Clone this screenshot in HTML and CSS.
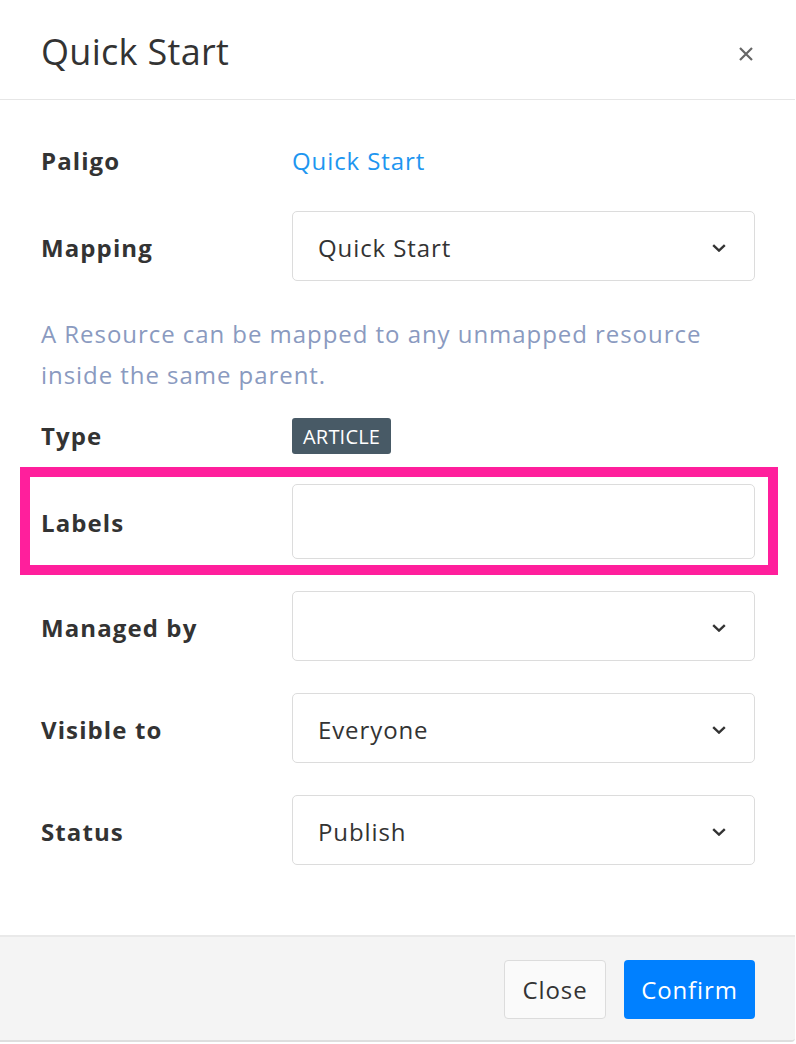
FILE: index.html
```html
<!DOCTYPE html>
<html lang="en">
<head>
<meta charset="utf-8">
<title>Quick Start</title>
<link rel="stylesheet" href="styles.css">
</head>
<body>
<div class="modal">
  <header class="modal-header">
    <h1 class="modal-title">Quick Start</h1>
    <button class="modal-close" aria-label="Close">
      <svg width="14" height="14" viewBox="0 0 14 14"><path d="M1 1L13 13M13 1L1 13" stroke="#666" stroke-width="2.2" fill="none"/></svg>
    </button>
  </header>
  <div class="modal-body">
    <div class="row row-text">
      <div class="label">Paligo</div>
      <div class="value"><a class="link" href="#">Quick Start</a></div>
    </div>
    <div class="row row-field row-mapping">
      <div class="label">Mapping</div>
      <div class="select"><span>Quick Start</span><svg class="chev" width="14" height="8" viewBox="0 0 14 8"><path d="M1.2 1.2L7 6.6L12.8 1.2" stroke="#333" stroke-width="2.4" fill="none"/></svg></div>
    </div>
    <p class="help">A Resource can be mapped to any unmapped resource inside the same parent.</p>
    <div class="row row-type">
      <div class="label">Type</div>
      <div class="value"><span class="badge">ARTICLE</span></div>
    </div>
    <div class="row row-field row-labels">
      <div class="label">Labels</div>
      <div class="input"></div>
    </div>
    <div class="row row-field row-managed">
      <div class="label">Managed by</div>
      <div class="select"><span></span><svg class="chev" width="14" height="8" viewBox="0 0 14 8"><path d="M1.2 1.2L7 6.6L12.8 1.2" stroke="#333" stroke-width="2.4" fill="none"/></svg></div>
    </div>
    <div class="row row-field">
      <div class="label">Visible to</div>
      <div class="select"><span>Everyone</span><svg class="chev" width="14" height="8" viewBox="0 0 14 8"><path d="M1.2 1.2L7 6.6L12.8 1.2" stroke="#333" stroke-width="2.4" fill="none"/></svg></div>
    </div>
    <div class="row row-field">
      <div class="label">Status</div>
      <div class="select"><span>Publish</span><svg class="chev" width="14" height="8" viewBox="0 0 14 8"><path d="M1.2 1.2L7 6.6L12.8 1.2" stroke="#333" stroke-width="2.4" fill="none"/></svg></div>
    </div>
  </div>
  <footer class="modal-footer">
    <button class="btn btn-default">Close</button>
    <button class="btn btn-primary">Confirm</button>
  </footer>
</div>
</body>
</html>
```
FILE: styles.css
```css
html, body {
  margin: 0;
  padding: 0;
  background: #fff;
}
body {
  font-family: "Open Sans", "Liberation Sans", sans-serif;
  color: #333;
}
.modal {
  width: 795px;
  background: #fff;
}
.modal-header {
  height: 100px;
  border-bottom: 1px solid #e6e6e6;
  display: flex;
  align-items: center;
  justify-content: space-between;
  padding: 0 42px 0 41px;
  box-sizing: border-box;
}
.modal-title {
  margin: 4px 0 0;
  font-size: 36px;
  font-weight: 400;
  line-height: 1;
  color: #333;
  letter-spacing: 0.3px;
}
.modal-close {
  border: 0;
  background: none;
  padding: 0;
  width: 14px;
  height: 14px;
  display: flex;
  margin-top: 8px;
  cursor: pointer;
}
.modal-body {
  padding: 44px 40px 70px 41px;
}
.row {
  display: grid;
  grid-template-columns: 251px 1fr;
  align-items: center;
}
.label {
  font-size: 24px;
  font-weight: 700;
  color: #333;
  line-height: 34px;
  letter-spacing: 1.1px;
}
.row-field .label {
  padding-top: 3px;
}
.row-text {
  height: 34px;
}
.link {
  font-size: 24px;
  line-height: 34px;
  color: #1e96f0;
  text-decoration: none;
  letter-spacing: 0.9px;
}
.select, .input {
  height: 70px;
  box-sizing: border-box;
  border: 1.5px solid #dcdcdc;
  border-radius: 5px;
  background: #fff;
  display: flex;
  align-items: center;
  justify-content: space-between;
  padding: 3px 28px 0 25px;
  font-size: 24px;
  color: #333;
  letter-spacing: 0.9px;
}
.chev {
  display: block;
  margin-top: 0;
}
.help {
  margin: 32px 0 0;
  font-size: 24px;
  line-height: 41px;
  color: #8a9ac0;
  letter-spacing: 0.95px;
}
.row-type {
  margin-top: 23px;
  height: 36px;
}
.badge {
  display: inline-flex;
  align-items: center;
  height: 36px;
  padding: 0 11px;
  box-sizing: border-box;
  background: #485a66;
  color: #fff;
  font-size: 20px;
  border-radius: 3px;
  letter-spacing: 0.2px;
}
.row-field {
  margin-top: 32px;
}
.row.row-mapping {
  margin-top: 33px;
}
.row.row-labels {
  margin: 13px -23px 0 -21px;
  border: 10px solid #ff1f9c;
  padding: 7px 13px 6px 11px;
}
.row-labels .input {
  height: 75px;
}
.row.row-managed {
  margin-top: 16px;
}
.modal-footer {
  border-top: 2px solid #e9e9e9;
  border-bottom: 2px solid #dedede;
  background: #f4f4f4;
  display: flex;
  justify-content: flex-end;
  gap: 18px;
  padding: 23px 40px 21px;
  border-bottom-right-radius: 4px;
}
.btn {
  font-family: "Open Sans", "Liberation Sans", sans-serif;
  font-size: 24px;
  height: 59px;
  border-radius: 4px;
  box-sizing: border-box;
  cursor: pointer;
  padding: 0;
  letter-spacing: 0.9px;
}
.btn-default {
  width: 102px;
  background: #fafafa;
  border: 1.5px solid #dcdcdc;
  color: #333;
}
.btn-primary {
  width: 131px;
  background: #0080ff;
  border: 0;
  color: #fff;
}
```
